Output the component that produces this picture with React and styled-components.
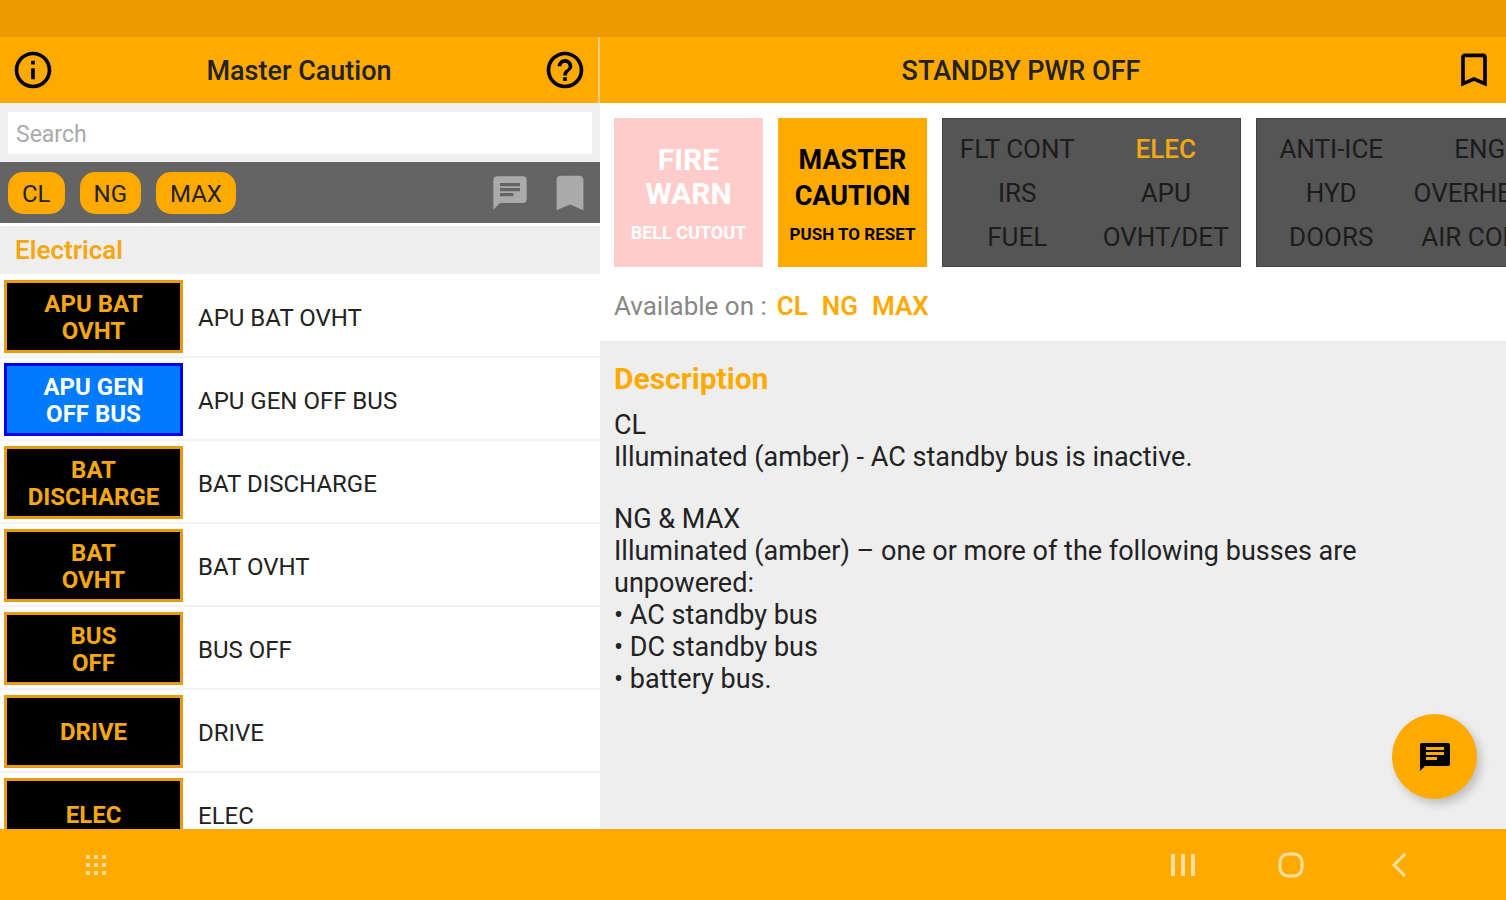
import React, { useState } from "react";
import styled, { createGlobalStyle } from "styled-components";
import {
  MdInfoOutline,
  MdHelpOutline,
  MdBookmarkBorder,
  MdBookmark,
  MdChat,
} from "react-icons/md";

const GlobalStyle = createGlobalStyle`
  * {
    box-sizing: border-box;
  }
  body {
    margin: 0;
    font-family: Roboto, "Liberation Sans", sans-serif;
    color: #222;
  }
  button, input {
    font-family: inherit;
  }
  h1, h2, p, ul {
    margin: 0;
    padding: 0;
  }
`;

const Screen = styled.div`
  height: 100vh;
  display: flex;
  flex-direction: column;
  overflow: hidden;
  background-color: white;
`;

const StatusBar = styled.div`
  flex: none;
  height: 37px;
  background-color: #ec9a00;
`;

const Panes = styled.div`
  flex: 1;
  min-height: 0;
  display: grid;
  grid-template-columns: 100fr 151fr;
  grid-template-rows: minmax(0, 1fr);
`;

const Pane = styled.section`
  min-width: 0;
  display: flex;
  flex-direction: column;
  overflow: hidden;
`;

const DetailPane = styled(Pane)`
  position: relative;
`;

const Header = styled.header`
  flex: none;
  height: 66px;
  display: flex;
  align-items: center;
  background-color: #ffaa00;
  border-right: ${(props) => (props.$divided ? "2px solid #f3cd80" : "none")};
`;

const Title = styled.h1`
  flex: 1;
  padding-top: 2px;
  font-size: 27px;
  line-height: 32px;
  font-weight: 500;
  text-align: center;
`;

const IconButton = styled.button`
  width: ${(props) => props.$width || 66}px;
  padding: 0;
  border: none;
  display: flex;
  justify-content: center;
  background: none;
  color: ${(props) => props.$color || "black"};
  cursor: pointer;
`;

const SearchBar = styled.div`
  flex: none;
  padding: 9px 8px 8px;
  background-color: #f0f0f0;
`;

const SearchInput = styled.input`
  display: block;
  width: 100%;
  height: 42px;
  padding: 2px 8px 0;
  border: none;
  background-color: white;
  font-size: 23px;
  &::placeholder {
    color: #aaa;
    opacity: 1;
  }
`;

const FilterBar = styled.div`
  flex: none;
  height: 61px;
  padding-left: 8px;
  display: flex;
  align-items: center;
  background-color: #646464;
`;

const Chips = styled.div`
  flex: 1;
  display: flex;
  gap: 15px;
`;

const Chip = styled.button`
  height: 42px;
  padding: 2px 14px 0;
  border: none;
  border-radius: 15px;
  background-color: #ffaa00;
  color: #222;
  font-size: 24px;
  cursor: pointer;
`;

const GroupTitle = styled.h2`
  flex: none;
  margin: 3px 0 1px;
  padding: 0 15px;
  background-color: #eee;
  color: #f5a811;
  font-size: 26px;
  line-height: 48px;
  font-weight: 600;
`;

const LightList = styled.ul`
  flex: 1;
  min-height: 0;
  overflow: hidden;
  list-style: none;
`;

const LightRow = styled.li`
  height: 83px;
  padding: 5px 4px 3px;
  border-bottom: 2px solid #f3f3f3;
  display: flex;
  align-items: center;
  gap: 15px;
`;

const LightBadge = styled.button`
  flex: none;
  width: 179px;
  height: 73px;
  padding: 2px 0 0;
  border: 3px solid ${(props) => (props.$advisory ? "#0000ee" : "#e69c0c")};
  background-color: ${(props) => (props.$advisory ? "#007aff" : "black")};
  color: ${(props) => (props.$advisory ? "white" : "#f5a811")};
  font-size: 24px;
  line-height: 27px;
  font-weight: 700;
  white-space: pre-line;
  cursor: pointer;
`;

const LightName = styled.span`
  padding-top: 2px;
  font-size: 24px;
  line-height: 28px;
`;

const Panels = styled.div`
  flex: none;
  padding: 15px 0 0 14px;
  display: flex;
  gap: 15px;
  overflow: hidden;
`;

const MasterLight = styled.div`
  flex: none;
  width: 149px;
  height: 149px;
  display: flex;
  flex-direction: column;
  align-items: center;
  justify-content: center;
  background-color: ${(props) => (props.$fire ? "#ffcccc" : "#ffaa00")};
  color: ${(props) => (props.$fire ? "white" : "black")};
  font-weight: 700;
`;

const MasterText = styled.span`
  font-size: ${(props) => (props.$large ? 30 : 27)}px;
  line-height: ${(props) => (props.$large ? 34 : 36)}px;
  text-align: center;
  white-space: pre-line;
`;

const MasterHint = styled.span`
  margin-top: ${(props) => (props.$small ? 10 : 12)}px;
  font-size: ${(props) => (props.$small ? 17 : 18)}px;
  line-height: 20px;
  white-space: nowrap;
`;

const Annunciator = styled.div`
  flex: none;
  width: 299px;
  height: 149px;
  padding-top: 8px;
  display: grid;
  grid-template-columns: 1fr 1fr;
  grid-auto-rows: 44px;
  align-items: center;
  justify-items: center;
  border: 1px solid #444;
  background-color: #555;
`;

const System = styled.span`
  color: ${(props) => (props.$lit ? "#f5a811" : "#1c1c1c")};
  font-size: 26px;
  line-height: 32px;
  font-weight: ${(props) => (props.$lit ? 500 : 400)};
  white-space: nowrap;
`;

const Available = styled.div`
  flex: none;
  padding: 23px 14px 19px;
  display: flex;
  gap: 14px;
  font-size: 26px;
  line-height: 32px;
  color: #888;
`;

const Variant = styled.span`
  color: #ffaa00;
  font-weight: 600;
`;

const AvailableLabel = styled.span`
  margin-right: -4px;
`;

const Description = styled.div`
  flex: 1;
  padding: 22px 14px;
  background-color: #eee;
`;

const DescriptionTitle = styled.h2`
  margin-bottom: 14px;
  color: #ffaa00;
  font-size: 30px;
  line-height: 32px;
  font-weight: 700;
`;

const Paragraph = styled.p`
  font-size: 27px;
  line-height: 32px;
  white-space: pre-line;
  & + & {
    margin-top: 30px;
  }
`;

const Fab = styled.button`
  position: absolute;
  right: 29px;
  bottom: 30px;
  width: 85px;
  height: 85px;
  padding: 0;
  border: none;
  border-radius: 50%;
  display: flex;
  align-items: center;
  justify-content: center;
  background-color: #ffaa00;
  color: black;
  box-shadow: 4px 5px 10px rgba(0, 0, 0, 0.2);
  cursor: pointer;
`;

const NavBar = styled.nav`
  flex: none;
  height: 71px;
  padding: 0 53px 0 42px;
  display: flex;
  align-items: center;
  background-color: #ffaa00;
`;

const Spacer = styled.div`
  flex: 1;
`;

const lights = [
  { label: "APU BAT\nOVHT", name: "APU BAT OVHT" },
  { label: "APU GEN\nOFF BUS", name: "APU GEN OFF BUS", advisory: true },
  { label: "BAT\nDISCHARGE", name: "BAT DISCHARGE" },
  { label: "BAT\nOVHT", name: "BAT OVHT" },
  { label: "BUS\nOFF", name: "BUS OFF" },
  { label: "DRIVE", name: "DRIVE" },
  { label: "ELEC", name: "ELEC" },
];

const variants = ["CL", "NG", "MAX"];

const leftSystems = ["FLT CONT", "ELEC", "IRS", "APU", "FUEL", "OVHT/DET"];
const rightSystems = ["ANTI-ICE", "ENG", "HYD", "OVERHEAD", "DOORS", "AIR COND"];

const AppsIcon = () => (
  <svg width="22" height="22" viewBox="0 0 22 22" fill="#ffe0a0">
    {[1, 9, 17].map((y) =>
      [1, 9, 17].map((x) => (
        <rect key={`${x}-${y}`} x={x} y={y} width="4" height="4" rx="1" />
      ))
    )}
  </svg>
);

const RecentsIcon = () => (
  <svg width="26" height="24" viewBox="0 0 26 24" fill="#ffe0a0">
    <rect x="1" y="1" width="4" height="22" />
    <rect x="11" y="1" width="4" height="22" />
    <rect x="21" y="1" width="4" height="22" />
  </svg>
);

const HomeIcon = () => (
  <svg width="26" height="26" viewBox="0 0 26 26" fill="none">
    <rect x="2" y="2" width="22" height="22" rx="8" stroke="#ffe0a0" strokeWidth="3" />
  </svg>
);

const BackIcon = () => (
  <svg width="16" height="26" viewBox="0 0 16 26" fill="none">
    <path d="M14 2L3 13L14 24" stroke="#ffe0a0" strokeWidth="3" />
  </svg>
);

// squarer bubble than MdChat, with the text lines close together
const NoteIcon = () => (
  <svg width="32" height="30" viewBox="0 0 32 30">
    <path
      fill="currentColor"
      fillRule="evenodd"
      d="M3 1H29Q31 1 31 3V22Q31 24 29 24H6L1 29V3Q1 1 3 1ZM7 5V8H25V5ZM7 10V13H25V10ZM7 15V18H18V15Z"
    />
  </svg>
);

const App = () => {
  const [search, setSearch] = useState("");

  return (
    <Screen>
      <GlobalStyle />
      <StatusBar />
      <Panes>
        <Pane>
          <Header $divided>
            <IconButton aria-label="Info">
              <MdInfoOutline size={44} />
            </IconButton>
            <Title>Master Caution</Title>
            <IconButton aria-label="Help">
              <MdHelpOutline size={44} />
            </IconButton>
          </Header>
          <SearchBar>
            <SearchInput
              aria-label="Search"
              placeholder="Search"
              value={search}
              onChange={(e) => setSearch(e.target.value)}
            />
          </SearchBar>
          <FilterBar>
            <Chips>
              {variants.map((variant) => (
                <Chip key={variant}>{variant}</Chip>
              ))}
            </Chips>
            <IconButton $width={60} $color="#aaa" aria-label="Notes">
              <MdChat size={40} />
            </IconButton>
            <IconButton $width={60} $color="#aaa" aria-label="Bookmarks">
              <MdBookmark size={46} />
            </IconButton>
          </FilterBar>
          <GroupTitle>Electrical</GroupTitle>
          <LightList>
            {lights.map((light) => (
              <LightRow key={light.name}>
                <LightBadge $advisory={light.advisory}>{light.label}</LightBadge>
                <LightName>{light.name}</LightName>
              </LightRow>
            ))}
          </LightList>
        </Pane>
        <DetailPane>
          <Header>
            <Title>STANDBY PWR OFF</Title>
            <IconButton $width={64} aria-label="Bookmark">
              <MdBookmarkBorder size={44} />
            </IconButton>
          </Header>
          <Panels>
            <MasterLight $fire>
              <MasterText $large>{"FIRE\nWARN"}</MasterText>
              <MasterHint>BELL CUTOUT</MasterHint>
            </MasterLight>
            <MasterLight>
              <MasterText>{"MASTER\nCAUTION"}</MasterText>
              <MasterHint $small>PUSH TO RESET</MasterHint>
            </MasterLight>
            <Annunciator>
              {leftSystems.map((system) => (
                <System key={system} $lit={system === "ELEC"}>
                  {system}
                </System>
              ))}
            </Annunciator>
            <Annunciator>
              {rightSystems.map((system) => (
                <System key={system}>{system}</System>
              ))}
            </Annunciator>
          </Panels>
          <Available>
            <AvailableLabel>Available on :</AvailableLabel>
            {variants.map((variant) => (
              <Variant key={variant}>{variant}</Variant>
            ))}
          </Available>
          <Description>
            <DescriptionTitle>Description</DescriptionTitle>
            <Paragraph>
              {"CL\nIlluminated (amber) - AC standby bus is inactive."}
            </Paragraph>
            <Paragraph>
              {"NG & MAX\nIlluminated (amber) – one or more of the following busses are unpowered:\n• AC standby bus\n• DC standby bus\n• battery bus."}
            </Paragraph>
          </Description>
          <Fab aria-label="Add note">
            <NoteIcon />
          </Fab>
        </DetailPane>
      </Panes>
      <NavBar>
        <IconButton $width={108} aria-label="Apps">
          <AppsIcon />
        </IconButton>
        <Spacer />
        <IconButton $width={108} aria-label="Recents">
          <RecentsIcon />
        </IconButton>
        <IconButton $width={108} aria-label="Home">
          <HomeIcon />
        </IconButton>
        <IconButton $width={108} aria-label="Back">
          <BackIcon />
        </IconButton>
      </NavBar>
    </Screen>
  );
};

export default App;
